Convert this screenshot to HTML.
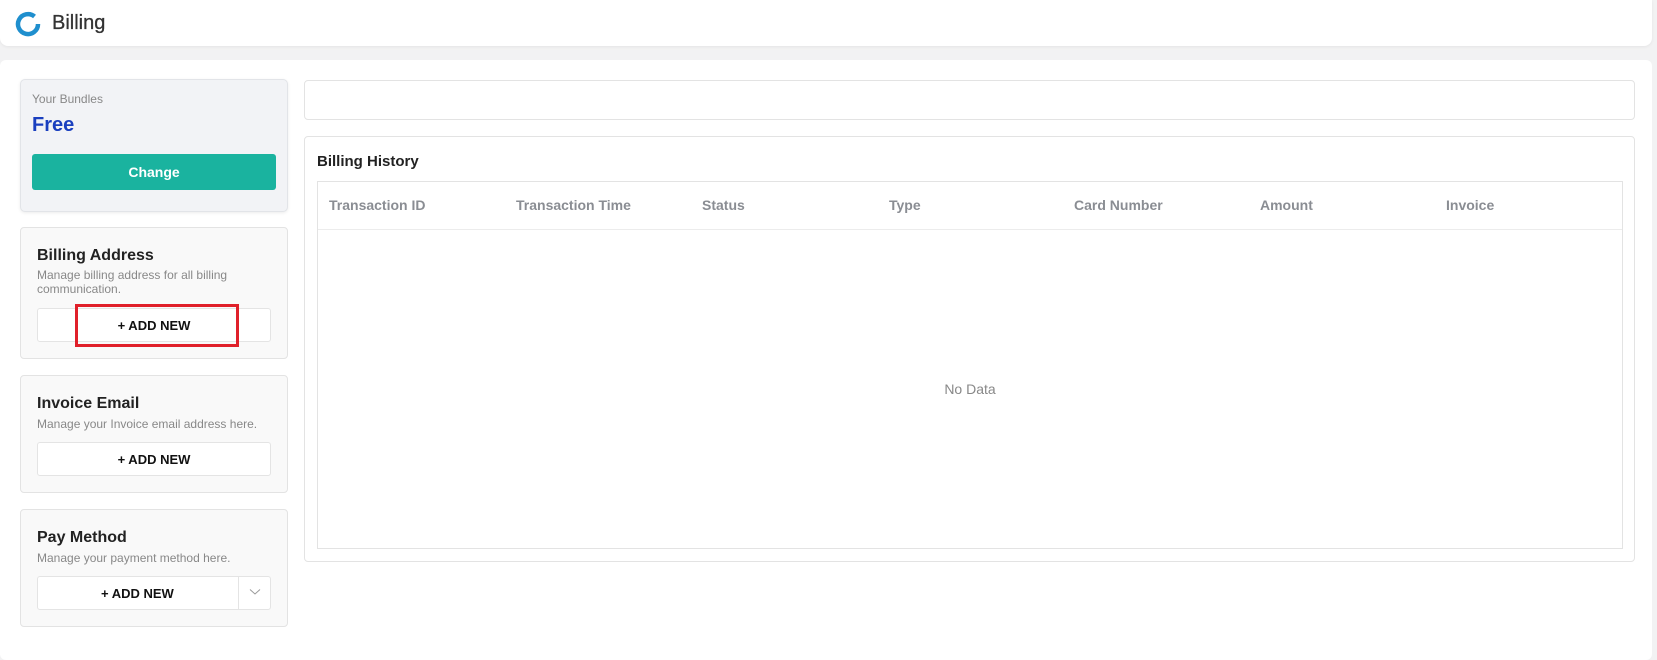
<!DOCTYPE html>
<html><head><meta charset="utf-8"><style>
*{box-sizing:border-box;margin:0;padding:0}
body{width:1657px;height:647px;background:#f2f2f3;font-family:"Liberation Sans",Arial,sans-serif;position:relative;overflow:hidden;color:#222}
.abs{position:absolute}
.hdr{left:0;top:0;width:1652px;height:46px;background:#fff;border-radius:0 0 8px 8px;box-shadow:0 1px 3px rgba(0,0,0,.06)}
.main{left:0;top:60px;width:1652px;height:600px;background:#fff;border-radius:6px}
.card{background:#f9f9f9;border:1px solid #e3e3e3;border-radius:4px}
.btn{background:#fff;border:1px solid #e4e4e4;border-radius:3px;font-weight:bold;font-size:13px;color:#111;display:flex;align-items:center;justify-content:center}
.t{font-size:16px;font-weight:bold;color:#222}
.d{font-size:12px;color:#888;line-height:14px}
.th{font-size:14px;font-weight:bold;color:#8a8d93;top:197px}
</style></head><body>
<div class="abs hdr"></div>
<svg class="abs" style="left:15px;top:11px" width="26" height="26" viewBox="0 0 26 26"><path d="M19.5 5.5 A10 10 0 1 0 23 13" fill="none" stroke="#1f8fce" stroke-width="4.5"/></svg>
<div class="abs" style="left:52px;top:12px;font-size:20px;color:#333;-webkit-text-stroke:0.3px #333">Billing</div>
<div class="abs main"></div>

<div class="abs" style="left:20px;top:79px;width:268px;height:133px;background:#f2f3f6;border:1px solid #e2e4e8;border-radius:5px;box-shadow:0 1px 3px rgba(0,0,0,.08)"></div>
<div class="abs" style="left:32px;top:92px;font-size:12px;color:#888">Your Bundles</div>
<div class="abs" style="left:32px;top:114px;font-size:20px;font-weight:bold;color:#1a3fbf">Free</div>
<div class="abs" style="left:32px;top:154px;width:244px;height:36px;background:#1ab39f;border-radius:3px;color:#fff;font-weight:bold;font-size:14px;display:flex;align-items:center;justify-content:center">Change</div>

<div class="abs card" style="left:20px;top:227px;width:268px;height:132px"></div>
<div class="abs t" style="left:37px;top:247px">Billing Address</div>
<div class="abs d" style="left:37px;top:268px">Manage billing address for all billing<br>communication.</div>
<div class="abs btn" style="left:37px;top:308px;width:234px;height:34px">+ ADD NEW</div>
<div class="abs" style="left:75px;top:304px;width:164px;height:43px;border:3px solid #e0202a"></div>

<div class="abs card" style="left:20px;top:375px;width:268px;height:118px"></div>
<div class="abs t" style="left:37px;top:395px">Invoice Email</div>
<div class="abs d" style="left:37px;top:417px">Manage your Invoice email address here.</div>
<div class="abs btn" style="left:37px;top:442px;width:234px;height:34px">+ ADD NEW</div>

<div class="abs card" style="left:20px;top:509px;width:268px;height:118px"></div>
<div class="abs t" style="left:37px;top:529px">Pay Method</div>
<div class="abs d" style="left:37px;top:551px">Manage your payment method here.</div>
<div class="abs btn" style="left:37px;top:576px;width:234px;height:34px;justify-content:flex-start;padding-left:63px">+ ADD NEW</div>
<div class="abs" style="left:238px;top:577px;width:1px;height:32px;background:#e4e4e4"></div>
<svg class="abs" style="left:249px;top:588px" width="12" height="8" viewBox="0 0 12 8"><path d="M1 1.5 L6 6 L11 1.5" fill="none" stroke="#999" stroke-width="1"/></svg>

<div class="abs" style="left:304px;top:80px;width:1331px;height:40px;border:1px solid #e3e3e3;border-radius:4px"></div>
<div class="abs" style="left:304px;top:136px;width:1331px;height:426px;border:1px solid #e3e3e3;border-radius:4px"></div>
<div class="abs" style="left:317px;top:153px;font-size:15px;font-weight:bold;color:#222">Billing History</div>
<div class="abs" style="left:317px;top:181px;width:1306px;height:368px;border:1px solid #e3e3e3"></div>
<div class="abs" style="left:318px;top:229px;width:1304px;height:1px;background:#ececec"></div>
<div class="abs th" style="left:329px">Transaction ID</div>
<div class="abs th" style="left:516px">Transaction Time</div>
<div class="abs th" style="left:702px">Status</div>
<div class="abs th" style="left:889px">Type</div>
<div class="abs th" style="left:1074px">Card Number</div>
<div class="abs th" style="left:1260px">Amount</div>
<div class="abs th" style="left:1446px">Invoice</div>
<div class="abs" style="left:920px;top:381px;width:100px;text-align:center;font-size:14px;color:#888">No Data</div>
</body></html>
